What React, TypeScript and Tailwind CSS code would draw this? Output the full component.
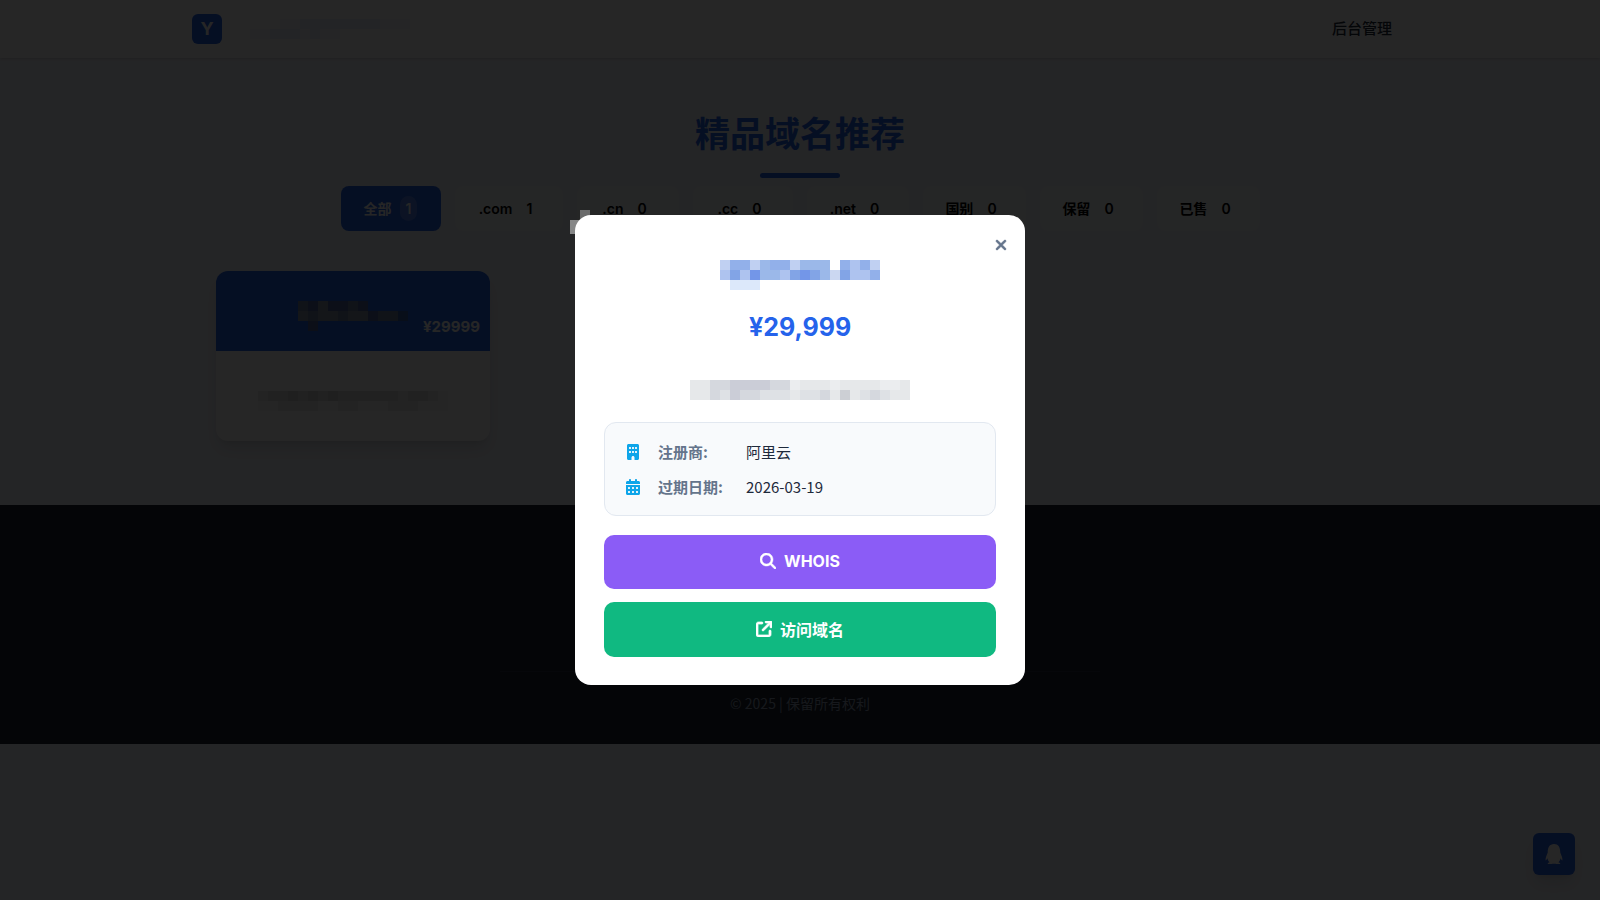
import React from 'react'
import { FaArrowUpRightFromSquare, FaBuilding, FaCalendarDays, FaMagnifyingGlass, FaQq, FaXmark } from 'react-icons/fa6'

const tabs = [
    { label: '全部', count: 1, width: 'w-[100px]' },
    { label: '.com', count: 1, width: 'w-[108px]' },
    { label: '.cn', count: 0, width: 'w-[102px]' },
    { label: '.cc', count: 0, width: 'w-[100px]' },
    { label: '.net', count: 0, width: 'w-[102px]' },
    { label: '国别', count: 0, width: 'w-[103px]' },
    { label: '保留', count: 0, width: 'w-[103px]' },
    { label: '已售', count: 0, width: 'w-[103px]' },
]

// one string per row of 10px cells, '.' leaves the cell empty
const Mosaic = ({ rows, colors, className }: { rows: string[]; colors: Record<string, string>; className?: string }) => (
    <svg
        aria-hidden="true"
        width={rows[0].length * 10}
        height={rows.length * 10}
        shapeRendering="crispEdges"
        className={className}
    >
        {rows.map((row, y) =>
            row.split('').map((c, x) =>
                colors[c] ? <rect key={`${x}-${y}`} x={x * 10} y={y * 10} width="10" height="10" fill={colors[c]} /> : null
            )
        )}
    </svg>
)

const blues = { a: '#c0d0f2', b: '#92b0ea', c: '#9bb8e9', d: '#aec3ef', e: '#7396e8', f: '#dce8fa', g: '#82a4e6', h: '#cbd7f1' }
const grays = { a: '#e6e8ea', b: '#d5d8de', c: '#cbcdd7', d: '#dee1e5', e: '#ebedef', f: '#cccfd4' }
const cardBlues = { a: '#5067a0', b: '#8791a5', c: '#6f7e9f', d: '#3b5da8' }
const cardGrays = { a: '#f4f4f4', b: '#cfcfcf', c: '#dedede', d: '#e9e9e9' }
const logoBlues = { a: '#f4f7ff', b: '#eaf0fc' }

const Header = () => (
    <header className="bg-white shadow-sm">
        <div className="mx-auto flex h-[58px] max-w-[1216px] items-center justify-between">
            <div className="flex items-center gap-7">
                <a href="#" className="flex h-[30px] w-[30px] items-center justify-center rounded-md bg-[#2563eb] font-[Inter,sans-serif] text-lg font-bold text-white">
                    Y
                </a>
                <Mosaic rows={['...aabbbbbbbbaaa', 'aabbbabaa.......']} colors={logoBlues} />
            </div>
            <nav className="px-4 pb-1">
                <a href="#" className="text-[15px] font-medium text-[#1e293b]">后台管理</a>
            </nav>
        </div>
    </header>
)

const DomainCard = () => (
    <article className="overflow-hidden rounded-xl bg-white shadow-lg">
        <div className="flex h-20 flex-col bg-[#2563eb] pt-[30px]">
            <Mosaic rows={['cabaaca....', 'bcbbcbbaccd', '.a.........']} colors={cardBlues} className="mx-auto" />
            <span className="-mt-[14px] pr-[10px] text-right font-[Inter,sans-serif] text-[15px] leading-5 font-bold text-white">¥29999</span>
        </div>
        <div className="flex h-[90px] items-center justify-center pt-[10px]">
            <Mosaic rows={['dccbcbcbccccccdccda', 'aaddddaaddaaadddaaa']} colors={cardGrays} />
        </div>
    </article>
)

const Footer = () => (
    <footer className="mt-16 flex h-[239px] flex-col items-center justify-end bg-[#1b2233] pb-[31px]">
        <div className="w-full max-w-[600px] border-t border-[#2b3444] pt-[21px]">
            <p className="text-center text-sm text-[#94a3b8]">© 2025 | 保留所有权利</p>
        </div>
    </footer>
)

const DomainModal = () => (
    <div className="fixed inset-0 flex items-center justify-center bg-black/85">
        <div role="dialog" aria-modal="true" aria-label="域名详情" className="relative w-full max-w-[450px] rounded-2xl bg-white px-[29px] pt-[45px] pb-7">
            {/* Pixelated corner */}
            <svg aria-hidden="true" width="20" height="30" className="absolute -top-[5px] -left-[5px] -z-10">
                <rect x="10" width="10" height="10" fill="#6a6b6b" />
                <rect y="10" width="10" height="14" fill="#868787" />
            </svg>
            <button type="button" aria-label="关闭" className="absolute top-5 right-[14px] flex h-5 w-5 items-center justify-center text-base text-[#64748b]">
                <FaXmark stroke="currentColor" strokeWidth="20" />
            </button>

            <Mosaic
                rows={['abbacbbaccc.bdba', 'dgdeccdgegchgddb', '.fff............']}
                colors={blues}
                className="mx-auto"
            />
            <p className="mt-[19px] text-center font-[Inter,sans-serif] text-[25px] leading-9 font-bold text-[#2563eb]">¥29,999</p>
            <Mosaic
                rows={['aabbccccbbeaaaeaaaaeea', 'aabdcbbdddaddbafadbdaa']}
                colors={grays}
                className="mx-auto mt-[35px]"
            />

            <dl className="mt-[22px] rounded-xl border border-[#e2e8f0] bg-[#f8fafc] px-5 py-[11px] text-[15px] leading-[35px]">
                <div className="flex items-center">
                    <FaBuilding className="h-4 w-4 text-[#0ea5e9]" />
                    <dt className="ml-[17px] w-[88px] font-semibold text-[#64748b]">注册商:</dt>
                    <dd className="text-[#1e293b]">阿里云</dd>
                </div>
                <div className="flex items-center">
                    <FaCalendarDays className="h-4 w-4 text-[#0ea5e9]" />
                    <dt className="ml-[17px] w-[88px] font-semibold text-[#64748b]">过期日期:</dt>
                    <dd className="text-[#1e293b]">2026-03-19</dd>
                </div>
            </dl>

            <div className="mt-[19px] flex flex-col gap-[13px]">
                <button type="button" className="flex h-[54px] items-center justify-center gap-2 rounded-[10px] bg-[#8b5cf6] pb-[2px] font-[Inter,sans-serif] font-bold text-white">
                    <FaMagnifyingGlass stroke="currentColor" strokeWidth="16" />
                    WHOIS
                </button>
                <button type="button" className="flex h-[55px] items-center justify-center gap-2 rounded-[10px] bg-[#10b981] pb-[2px] font-bold text-white">
                    <FaArrowUpRightFromSquare stroke="currentColor" strokeWidth="24" />
                    访问域名
                </button>
            </div>
        </div>
    </div>
)

const App = () => {
    return (
        <div className="min-h-screen bg-[#f1f4fb] font-['Noto_Sans_CJK_SC',sans-serif] text-[#1e293b]">
            <Header />
            <main className="mx-auto max-w-[1168px] pt-[47px]">
                <h1 className="text-center text-[35px] leading-[54px] font-bold text-[#2563eb]">精品域名推荐</h1>
                <div className="mx-auto mt-[14px] h-[5px] w-20 rounded-sm bg-[#2563eb]" />

                <div className="mt-2 flex flex-wrap justify-center gap-[14px]">
                    {tabs.map((tab, i) => (
                        <button
                            key={tab.label}
                            type="button"
                            className={`${tab.width} flex h-[45px] items-center justify-center gap-2 rounded-lg font-[Inter,'Noto_Sans_CJK_SC',sans-serif] text-[14px] font-semibold ${i === 0 ? 'bg-[#2563eb] text-white' : 'bg-[#f9fafb] text-black'}`}
                        >
                            {tab.label}
                            <span className={`rounded-full px-[6px] py-[2px] ${i === 0 ? 'bg-white/20' : ''}`}>{tab.count}</span>
                        </button>
                    ))}
                </div>

                <div className="mt-10 grid grid-cols-4 gap-6">
                    <DomainCard />
                </div>
            </main>
            <Footer />

            <button type="button" aria-label="QQ" className="fixed right-[25px] bottom-[25px] flex h-[42px] w-[42px] items-center justify-center rounded-md bg-[#2563eb] text-xl text-white shadow-lg">
                <FaQq />
            </button>

            <DomainModal />
        </div>
    )
}

export default App
